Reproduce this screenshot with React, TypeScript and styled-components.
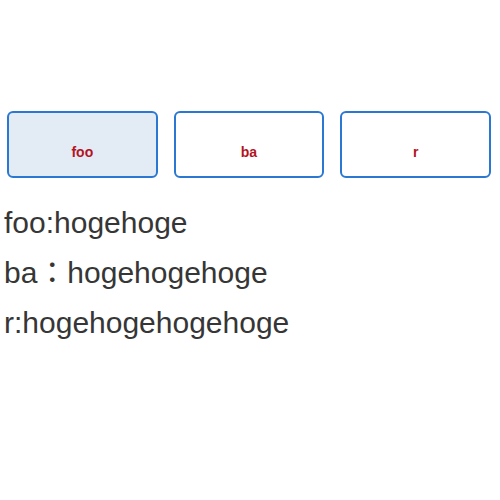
import styled, { createGlobalStyle } from 'styled-components'

const GlobalStyle = createGlobalStyle`
  body {
    margin: 0;
    background: #ffffff;
    font-family: 'Liberation Sans', Arial, 'Noto Sans CJK JP', sans-serif;
  }
`

const Page = styled.div`
  padding: 111px 9px 0 7px;
`

const Tabs = styled.div`
  display: grid;
  grid-template-columns: repeat(3, 1fr);
  gap: 16px;
`

const Tab = styled.button<{ $active?: boolean }>`
  height: 67px;
  display: flex;
  align-items: center;
  justify-content: center;
  padding: 14px 0 0;
  border: 2px solid #2a78d2;
  border-radius: 6px;
  background: ${(p) => (p.$active ? '#e3ebf5' : '#ffffff')};
  color: #b3141f;
  font-family: 'Liberation Sans', Arial, sans-serif;
  font-size: 14px;
  font-weight: bold;
  cursor: pointer;
`

const List = styled.div`
  margin-top: 20px;
  margin-left: -3px;
  display: flex;
  flex-direction: column;
`

const Line = styled.p`
  margin: 0;
  font-size: 30px;
  line-height: 50px;
  color: #363636;
`

const tabs = ['foo', 'ba', 'r']

const lines = ['foo:hogehoge', 'ba：hogehogehoge', 'r:hogehogehogehoge']

export default function App() {
  return (
    <>
      <GlobalStyle />
      <Page>
        <Tabs>
          {tabs.map((t, i) => (
            <Tab key={t} $active={i === 0}>
              {t}
            </Tab>
          ))}
        </Tabs>
        <List>
          {lines.map((l) => (
            <Line key={l}>{l}</Line>
          ))}
        </List>
      </Page>
    </>
  )
}
